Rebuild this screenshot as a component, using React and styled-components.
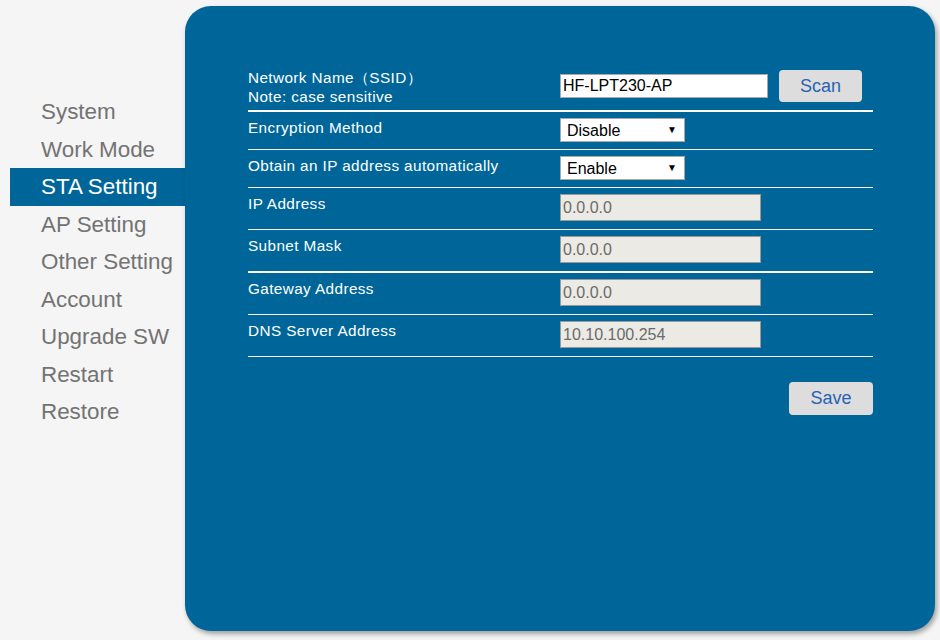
import React from "react";
import styled, { createGlobalStyle } from "styled-components";

const Global = createGlobalStyle`
  html, body { margin: 0; padding: 0; background: #f5f5f5; }
  body { font-family: "Liberation Sans", Arial, sans-serif; }
  * { box-sizing: border-box; }
`;

const Page = styled.div`
  display: flex;
  align-items: flex-start;
  padding-top: 6px;
  width: 940px;
  height: 640px;
  overflow: hidden;
`;

const Sidebar = styled.nav`
  width: 175px;
  margin-left: 10px;
  padding-top: 87px;
  display: flex;
  flex-direction: column;
`;

const MenuItem = styled.div`
  height: 37.5px;
  line-height: 37.5px;
  padding-left: 31px;
  font-size: 22.4px;
  white-space: nowrap;
  color: ${(p) => (p.$active ? "#ffffff" : "#737373")};
  background: ${(p) => (p.$active ? "#006699" : "transparent")};
`;

const Panel = styled.main`
  width: 750px;
  height: 625px;
  background: #006699;
  border-radius: 26px;
  box-shadow: 2px 3px 5px rgba(0, 0, 0, 0.35);
  padding: 54px 0 0 63px;
`;

const Form = styled.div`
  width: 625px;
  display: flex;
  flex-direction: column;
`;

const Row = styled.div`
  display: grid;
  grid-template-columns: 312px 1fr;
  align-items: ${(p) => (p.$center ? "center" : "start")};
  padding: ${(p) => p.$pad || "6px 0 7px"};
  border-bottom: ${(p) => (p.$thick ? 2 : 1)}px solid #ffffff;
`;

const Label = styled.div`
  color: #ffffff;
  font-size: 15.3px;
  letter-spacing: 0.4px;
  line-height: 19px;
  white-space: nowrap;
  padding-top: ${(p) => (p.$top ? p.$top : 0)}px;
`;

const Controls = styled.div`
  display: flex;
  align-items: center;
  gap: 11px;
`;

const TextInput = styled.input`
  width: 208px;
  height: 24px;
  border: 1px solid #a9a9a9;
  background: #ffffff;
  font-family: "Liberation Sans", Arial, sans-serif;
  font-size: 16px;
  color: #000;
  padding: 0 2px;
  outline: none;
`;

const ReadOnlyInput = styled.input`
  width: 201px;
  height: 27px;
  border: 1px solid #9a9a9a;
  background: #ebeae5;
  font-family: "Liberation Sans", Arial, sans-serif;
  font-size: 16px;
  color: #6b6b6b;
  padding: 0 2px;
  outline: none;
`;

const SelectWrap = styled.div`
  position: relative;
  width: 125px;
  height: 24px;
`;

const Select = styled.select`
  appearance: none;
  -webkit-appearance: none;
  width: 100%;
  height: 100%;
  border: 1px solid #a9a9a9;
  border-radius: 0;
  background: #ffffff;
  font-family: "Liberation Sans", Arial, sans-serif;
  font-size: 16px;
  color: #000;
  padding: 0 0 0 6px;
  outline: none;
`;

const Arrow = styled.span`
  position: absolute;
  right: 8px;
  top: 6px;
  font-size: 10px;
  line-height: 12px;
  color: #000;
  pointer-events: none;
`;

const Button = styled.button`
  width: ${(p) => p.$w || 83}px;
  height: ${(p) => p.$h || 32}px;
  border: none;
  border-radius: 4px;
  background: #dddddd;
  color: #2863b3;
  font-family: "Liberation Sans", Arial, sans-serif;
  font-size: 18px;
  padding: 0;
  cursor: pointer;
`;

const Actions = styled.div`
  display: flex;
  justify-content: flex-end;
  padding-top: 25px;
`;

const menu = [
  "System",
  "Work Mode",
  "STA Setting",
  "AP Setting",
  "Other Setting",
  "Account",
  "Upgrade SW",
  "Restart",
  "Restore",
];

const fields = [
  { label: "IP Address", value: "0.0.0.0" },
  { label: "Subnet Mask", value: "0.0.0.0", thick: true },
  { label: "Gateway Address", value: "0.0.0.0" },
  { label: "DNS Server Address", value: "10.10.100.254" },
];

function Dropdown({ value, options }) {
  return (
    <SelectWrap>
      <Select defaultValue={value}>
        {options.map((o) => (
          <option key={o}>{o}</option>
        ))}
      </Select>
      <Arrow>▼</Arrow>
    </SelectWrap>
  );
}

export default function App() {
  return (
    <>
      <Global />
      <Page>
        <Sidebar>
          {menu.map((m) => (
            <MenuItem key={m} $active={m === "STA Setting"}>
              {m}
            </MenuItem>
          ))}
        </Sidebar>
        <Panel>
          <Form>
            <Row $center $thick $pad="6px 0 4px">
              <Label $top={2}>
                Network Name（SSID）
                <br />
                Note: case sensitive
              </Label>
              <Controls>
                <TextInput defaultValue="HF-LPT230-AP" />
                <Button>Scan</Button>
              </Controls>
            </Row>
            <Row>
              <Label>Encryption Method</Label>
              <Controls>
                <Dropdown value="Disable" options={["Disable", "WEP", "WPA"]} />
              </Controls>
            </Row>
            <Row>
              <Label>Obtain an IP address automatically</Label>
              <Controls>
                <Dropdown value="Enable" options={["Enable", "Disable"]} />
              </Controls>
            </Row>
            {fields.map((f) => (
              <Row key={f.label} $thick={f.thick} $pad="6px 0 8px">
                <Label>{f.label}</Label>
                <Controls>
                  <ReadOnlyInput value={f.value} disabled readOnly />
                </Controls>
              </Row>
            ))}
            <Actions>
              <Button $w={84} $h={33}>Save</Button>
            </Actions>
          </Form>
        </Panel>
      </Page>
    </>
  );
}
